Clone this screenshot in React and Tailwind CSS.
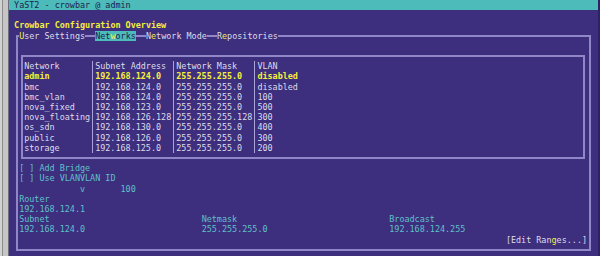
import React from 'react';

const networks = [
    ['admin', '192.168.124.0', '255.255.255.0', 'disabled'],
    ['bmc', '192.168.124.0', '255.255.255.0', 'disabled'],
    ['bmc_vlan', '192.168.124.0', '255.255.255.0', '100'],
    ['nova_fixed', '192.168.123.0', '255.255.255.0', '500'],
    ['nova_floating', '192.168.126.128', '255.255.255.128', '300'],
    ['os_sdn', '192.168.130.0', '255.255.255.0', '400'],
    ['public', '192.168.126.0', '255.255.255.0', '300'],
    ['storage', '192.168.125.0', '255.255.255.0', '200'],
];

const Key = ({ children }) => <span className="text-[#f5ef3a]">{children}</span>;

const Sep = () => (
    <div className="flex w-[1ch] justify-center">
        <div className="w-px bg-[#a9a1d9]" />
    </div>
);

const Dash = () => <div className="h-[2px] w-[2ch] self-center bg-[#8f87c7]" />;

const TableRow = ({ cells, className = '' }) => (
    <div className={`flex ${className}`}>
        <div className="w-[13ch]">{cells[0]}</div>
        <Sep />
        <div className="w-[15ch]">{cells[1]}</div>
        <Sep />
        <div className="w-[15ch]">{cells[2]}</div>
        <Sep />
        <div>{cells[3]}</div>
    </div>
);

const App = () => {
    return (
        <div className="flex h-[256px] w-[600px] overflow-hidden font-['DejaVu_Sans_Mono',monospace] text-[8.44px] leading-[10.2px] text-[#dcdcea]">
            {/* window edge */}
            <div className="flex">
                <div className="w-[2px] bg-[#d2d2d2]" />
                <div className="w-px bg-[#8c8c8c]" />
                <div className="w-[5px] bg-[#c6c6c6]" />
                <div className="w-px bg-[#6e6e7e]" />
            </div>

            <div className="flex-1 bg-[#3d2e7e] whitespace-pre">
                <div className="h-[10.2px] bg-[#4dbbb9] pl-[1ch] text-[#1d1d4d]">YaST2 - crowbar @ admin</div>
                <div className="h-[10.2px]" />
                <div className="pl-[1ch] font-bold text-[#f5ef3a]">Crowbar Configuration Overview</div>

                <fieldset className="ml-[calc(1.5ch_-_1px)] w-[calc(113ch_+_2px)] border-2 border-[#8f87c7] pb-[4.1px]">
                    <legend className="ml-[calc(0.5ch_-_1px)]">
                        <div className="flex h-[10.2px]">
                            <span><Key>U</Key>ser Settings</span>
                            <Dash />
                            <span className="bg-[#4dbbb9] text-[#1d1d4d]">Net<Key>w</Key>orks</span>
                            <Dash />
                            <span>N<Key>e</Key>twork Mode</span>
                            <Dash />
                            <span>R<Key>e</Key>positories</span>
                        </div>
                    </legend>

                    <div className="pl-[calc(0.5ch_-_1px)]">
                        <div className="ml-[calc(0.5ch_-_1px)] mt-[14.3px] w-[calc(111ch_+_2px)] border-2 border-[#8f87c7] py-[4.1px] pl-[calc(0.5ch_-_1px)]">
                            <TableRow cells={['Network', 'Subnet Address', 'Network Mask', 'VLAN']} />
                            {networks.map((n, i) => (
                                <TableRow
                                    key={n[0]}
                                    cells={n}
                                    className={i === 0 ? 'font-bold text-[#f5ef3a]' : ''}
                                />
                            ))}
                        </div>

                        <div className="mt-[4.1px] text-[#5fc1c9]">
                            <div>[ ] Add Bridge</div>
                            <div>[ ] Use VLANVLAN ID</div>
                            <div>{'            v       100'}</div>
                            <div>Router</div>
                            <div>192.168.124.1</div>
                            <div className="flex">
                                <div className="w-[36ch]">Subnet</div>
                                <div className="w-[37ch]">Netmask</div>
                                <div>Broadcast</div>
                            </div>
                            <div className="flex">
                                <div className="w-[36ch]">192.168.124.0</div>
                                <div className="w-[37ch]">255.255.255.0</div>
                                <div>192.168.124.255</div>
                            </div>
                            <div className="pl-[96ch] text-[#dcdcea]">[Edit Ran<Key>g</Key>es...]</div>
                        </div>
                    </div>
                </fieldset>
            </div>

            <div className="w-[2px] bg-[#2d2268]" />
        </div>
    );
};

export default App;
